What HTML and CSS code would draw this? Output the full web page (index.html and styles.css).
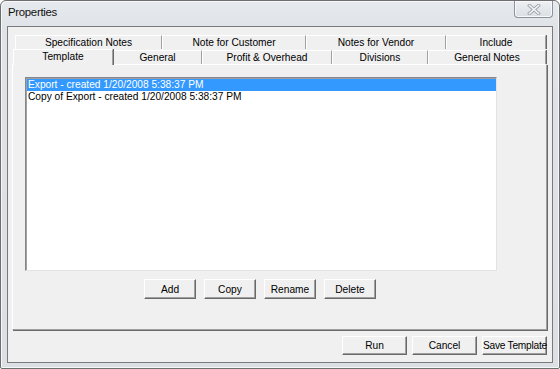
FILE: index.html
```html
<!DOCTYPE html>
<html>
<head>
  <title>Properties</title>
  <link rel="stylesheet" href="styles.css">
</head>
<body>

<div class="window">
  <div class="titlebar">
    <span class="title">Properties</span>
    <div class="close-btn">
      <svg width="14" height="11" viewBox="0 0 14 11">
        <path d="M2.5 1.5 L11.5 9.5 M11.5 1.5 L2.5 9.5" stroke="#a3a8ae" stroke-width="3.4" stroke-linecap="square"/>
        <path d="M2.5 1.5 L11.5 9.5 M11.5 1.5 L2.5 9.5" stroke="#f6f7f8" stroke-width="1.5" stroke-linecap="square"/>
      </svg>
    </div>
  </div>

  <div class="client">
    <div class="tab-row back">
      <div class="tab t-spec">Specification Notes</div>
      <div class="tab t-cust">Note for Customer</div>
      <div class="tab t-vend">Notes for Vendor</div>
      <div class="tab t-incl">Include</div>
    </div>
    <div class="tab-row front">
      <div class="tab t-templ active">Template</div>
      <div class="tab t-gen">General</div>
      <div class="tab t-profit">Profit &amp; Overhead</div>
      <div class="tab t-div">Divisions</div>
      <div class="tab t-gnotes">General Notes</div>
    </div>

    <div class="panel">
      <div class="list-area">
        <div class="listbox">
          <div class="item selected">Export - created 1/20/2008 5:38:37 PM</div>
          <div class="item">Copy of Export - created 1/20/2008 5:38:37 PM</div>
        </div>
        <div class="list-buttons">
          <button class="btn">Add</button>
          <button class="btn">Copy</button>
          <button class="btn">Rename</button>
          <button class="btn">Delete</button>
        </div>
      </div>
    </div>

    <div class="footer">
      <button class="btn btn-run">Run</button>
      <button class="btn">Cancel</button>
      <button class="btn btn-save">Save Template</button>
    </div>
  </div>
</div>

</body>
</html>
```

FILE: styles.css
```css
body {
  margin: 0;
  font-family: "Liberation Sans", Arial, sans-serif;
  font-size: 10.2px;
  color: #000;
  background: #fff;
}

/* Outer window frame */
.window {
  width: 560px;
  height: 369px;
  box-sizing: border-box;
  border: 1px solid #6e6e6e;
  border-radius: 6px 6px 2px 2px;
  background: linear-gradient(#e6e9ed, #dfe2e6 30px, #dcdfe3);
  padding: 0 6px 5px 6px;
  display: flex;
  flex-direction: column;
  box-shadow: inset 1px 1px 0 #f6f7f8, inset -1px -1px 0 #f6f7f8;
}

.titlebar {
  height: 25px;
  position: relative;
  flex-shrink: 0;
}

.title {
  display: block;
  padding: 5px 0 0 1px;
  font-size: 11.4px;
  letter-spacing: -0.3px;
  color: #111;
}

.close-btn {
  position: absolute;
  right: 0;
  top: 0;
  width: 39px;
  height: 17px;
  box-sizing: border-box;
  border: 1px solid #8d939b;
  border-top: none;
  border-radius: 0 0 4px 4px;
  background: linear-gradient(#eef0f2, #dcdfe3);
  display: flex;
  align-items: center;
  justify-content: center;
  box-shadow: inset 0 0 0 1px #f8f9fa;
}

/* Client area */
.client {
  flex: 1;
  background: #f0f0f0;
  border: 1px solid #7a7a7a;
  padding: 8px 4px 0 4px;
  display: flex;
  flex-direction: column;
}

/* Tabs */
.tab-row {
  display: flex;
  flex-shrink: 0;
}

.tab-row.back {
  height: 14px;
  margin-left: 3px;
}

.tab-row.front {
  height: 15px;
  margin-left: 1px;
}

.tab {
  box-sizing: border-box;
  border-top: 1px solid #fff;
  border-left: 1px solid #fff;
  border-right: 1px solid #a0a0a0;
  box-shadow: 1px 0 0 #696969;
  text-align: center;
  line-height: 14px;
  white-space: nowrap;
  background: #f0f0f0;
}

.tab-row.front .tab {
  margin-top: 1px;
}

.tab-row.front .tab.active {
  margin-top: 0;
  line-height: 14px;
  position: relative;
  z-index: 1;
  height: 16px;
}

.t-spec { width: 147px; }
.t-cust { width: 144px; }
.t-vend { width: 140px; }
.t-incl { width: 100px; }

.t-templ { width: 100px; }
.t-gen { width: 89px; }
.t-profit { width: 130px; }
.t-div { width: 96px; }
.t-gnotes { width: 118px; }

.panel {
  height: 266px;
  box-sizing: border-box;
  border-top: 1px solid #fff;
  border-left: 1px solid #fff;
  border-right: 1px solid #a0a0a0;
  border-bottom: 1px solid #a0a0a0;
  box-shadow: 1px 1px 0 #696969;
  margin-right: 1px;
  padding: 12px 0 0 12px;
}

.list-area {
  width: 472px;
}

.listbox {
  height: 194px;
  box-sizing: border-box;
  background: #fff;
  border-top: 1px solid #828790;
  border-left: 1px solid #828790;
  border-right: 1px solid #e3e3e3;
  border-bottom: 1px solid #e3e3e3;
  box-shadow: inset 1px 1px 0 #a0a0a0;
  padding: 1px 0 0 1px;
}

.item {
  height: 12px;
  line-height: 12px;
  padding-left: 1px;
  white-space: nowrap;
}

.item.selected {
  background: #3399ff;
  color: #fff;
}

.list-buttons {
  display: flex;
  justify-content: center;
  gap: 8px;
  margin-top: 8px;
  padding-right: 2px;
}

/* Push buttons */
.btn {
  width: 52px;
  height: 20px;
  box-sizing: border-box;
  margin: 0;
  padding: 0;
  font-family: "Liberation Sans", Arial, sans-serif;
  font-size: 10.2px;
  color: #000;
  background: #f0f0f0;
  border: 1px solid;
  border-color: #fff #696969 #696969 #fff;
  box-shadow: inset -1px -1px 0 #a0a0a0;
  white-space: nowrap;
}

.footer {
  display: flex;
  justify-content: flex-end;
  gap: 5px;
  margin-top: 6px;
  padding-right: 1px;
}

.footer .btn {
  width: 65px;
  height: 19px;
}

.footer .btn-save {
  letter-spacing: -0.25px;
}
```
